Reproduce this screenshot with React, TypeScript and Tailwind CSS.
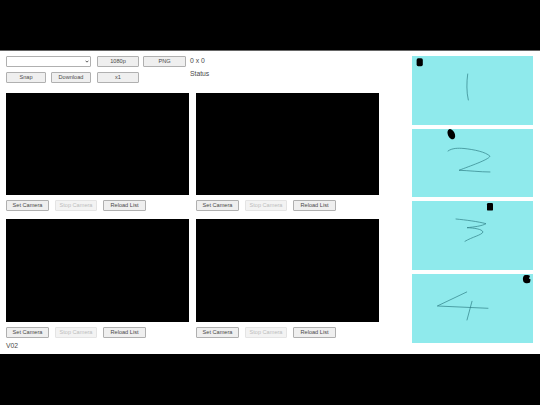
import React from 'react';

const font = { fontFamily: '"Liberation Sans", Arial, sans-serif' };

function Btn({ label, w, disabled }: { label: string; w: string; disabled?: boolean }) {
  return (
    <button
      disabled={disabled}
      className={`${w} h-[11px] flex items-center justify-center rounded-[1px] border text-[5.6px] leading-none ${
        disabled ? 'border-[#e4e4e4] bg-[#f3f3f3] text-[#bdbdbd]' : 'border-[#b0b0b0] bg-[#efefef] text-[#4a4a4a]'
      }`}
    >
      {label}
    </button>
  );
}

function CameraCell({ h }: { h: string }) {
  return (
    <div className="flex flex-col">
      <div className={`${h} bg-black`} />
      <div className="flex gap-[6px] mt-[5px]">
        <Btn label="Set Camera" w="w-[43px]" />
        <Btn label="Stop Camera" w="w-[42px]" disabled />
        <Btn label="Reload List" w="w-[43px]" />
      </div>
    </div>
  );
}

// hand written numbers on the cyan cards
function Thumb({ blob, paths }: { blob: React.ReactNode; paths: string[] }) {
  return (
    <div className="h-[68.7px] w-[121px] bg-[#8feaec]">
      <svg viewBox="0 0 121 68.7" className="w-full h-full block">
        {blob}
        {paths.map((d, i) => (
          <path key={i} d={d} fill="none" stroke="#2f7f86" strokeWidth="0.7" strokeLinecap="round" strokeLinejoin="round" />
        ))}
      </svg>
    </div>
  );
}

export default function App() {
  return (
    <div className="h-[405px] w-[540px] bg-black overflow-hidden flex flex-col" style={font}>
      <div className="h-[50px] shrink-0" />
      <div className="h-[304px] shrink-0 bg-white border-t border-[#666] flex">
        {/* left side */}
        <div className="w-[406px] pl-[6px] pt-[5px] flex flex-col">
          <div className="flex">
            <div className="w-[85px] flex flex-col gap-[5px]">
              <div className="relative h-[11px] w-[85px]">
                <select className="h-[11px] w-[85px] rounded-[1px] border border-[#b0b0b0] bg-white text-[5.6px] appearance-none block" />
                <svg viewBox="0 0 6 4" className="absolute right-[2px] top-[4px] w-[4px] h-[3px] pointer-events-none">
                  <path d="M0.8 0.8 L3 3 L5.2 0.8" fill="none" stroke="#333" strokeWidth="1.2" />
                </svg>
              </div>
              <div className="flex justify-between">
                <Btn label="Snap" w="w-[40px]" />
                <Btn label="Download" w="w-[40px]" />
              </div>
            </div>
            <div className="ml-[6px] w-[89px] flex flex-wrap gap-x-[4px] gap-y-[5px]">
              <Btn label="1080p" w="w-[42px]" />
              <Btn label="PNG" w="w-[43px]" />
              <Btn label="x1" w="w-[42px]" />
            </div>
            <div className="ml-[4px] flex flex-col text-[6.8px] leading-[8px] text-[#4a4a4a]">
              <span className="mt-[1px]">0 x 0</span>
              <span className="mt-[5px]">Status</span>
            </div>
          </div>
          <div className="grid grid-cols-[183px_183px] gap-x-[7px] gap-y-[8px] mt-[10px]">
            <CameraCell h="h-[102px]" />
            <CameraCell h="h-[102px]" />
            <CameraCell h="h-[103px]" />
            <CameraCell h="h-[103px]" />
          </div>
          <div className="mt-[4px] text-[6.8px] leading-[8px] text-[#4a4a4a]">V02</div>
        </div>
        {/* right side */}
        <div className="pl-[6px] pt-[5px] flex flex-col gap-[4px]">
          <Thumb
            blob={<rect x="4.6" y="2.3" width="6.2" height="7.9" rx="1.6" fill="#000" />}
            paths={['M55.7 18 C54.6 26 54.4 36 56.3 44']}
          />
          <Thumb
            blob={<ellipse cx="39.3" cy="5.2" rx="3.4" ry="5.4" transform="rotate(-25 39.3 5.2)" fill="#000" />}
            paths={['M36 22 C40 19 46 19 52 19.5 C62 20.5 74 23 78 27.3 C76 31 58 37 47 41.3 C56 41.5 68 43 78 43']}
          />
          <Thumb
            blob={<rect x="75" y="2" width="6" height="7.6" rx="1.2" fill="#000" />}
            paths={['M44 18 C54 19 66 20.5 74 22.7 C70 25 62 26 55 26.7 C62 27 70 28 71 31 C70 34 60 36 53 40.3']}
          />
          <Thumb
            blob={<path d="M112 1.6 C114 0.8 117 1 118 2 L117 4.4 L118.6 5.6 L118 8.6 C116 9.8 113 9.6 111.6 8 C110.6 6 110.6 3.4 112 1.6 Z" fill="#000" />}
            paths={['M54.7 18 L25.3 32 L76 34.3', 'M60 27.3 L55 46']}
          />
        </div>
      </div>
    </div>
  );
}
